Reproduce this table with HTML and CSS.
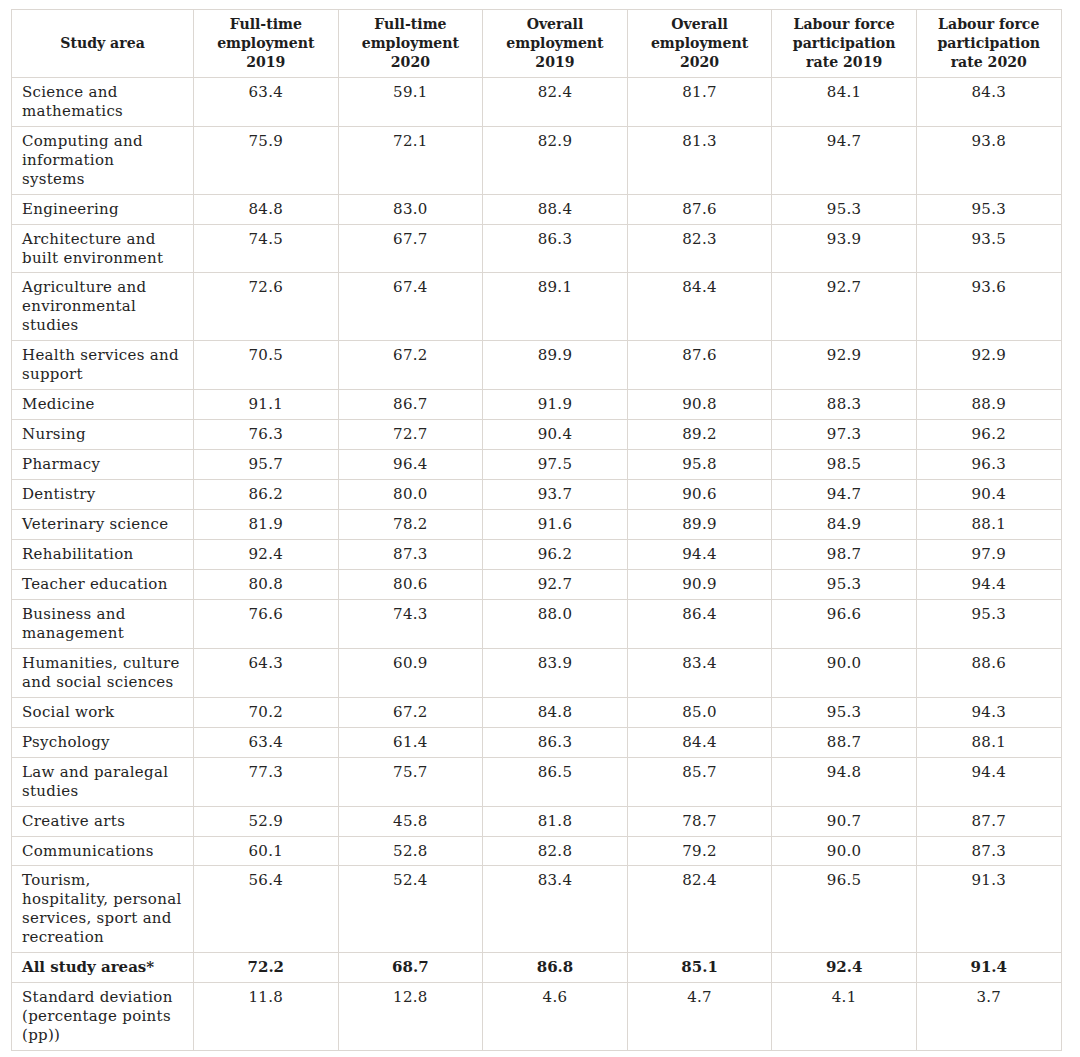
FILE: index.html
```html
<!DOCTYPE html>
<html lang="en">
<head>
<meta charset="utf-8">
<title>Employment outcomes by study area</title>
<link rel="stylesheet" href="styles.css">
</head>
<body>
<table class="data">
  <colgroup>
    <col class="c-area">
    <col class="c-num"><col class="c-num"><col class="c-num"><col class="c-num"><col class="c-num"><col class="c-num">
  </colgroup>
  <thead>
    <tr>
      <th>Study area</th>
      <th>Full-time<br>employment<br>2019</th>
      <th>Full-time<br>employment<br>2020</th>
      <th>Overall<br>employment<br>2019</th>
      <th>Overall<br>employment<br>2020</th>
      <th>Labour force<br>participation<br>rate 2019</th>
      <th>Labour force<br>participation<br>rate 2020</th>
    </tr>
  </thead>
  <tbody>
    <tr><td>Science and mathematics</td><td>63.4</td><td>59.1</td><td>82.4</td><td>81.7</td><td>84.1</td><td>84.3</td></tr>
    <tr><td>Computing and<br>information<br>systems</td><td>75.9</td><td>72.1</td><td>82.9</td><td>81.3</td><td>94.7</td><td>93.8</td></tr>
    <tr><td>Engineering</td><td>84.8</td><td>83.0</td><td>88.4</td><td>87.6</td><td>95.3</td><td>95.3</td></tr>
    <tr><td>Architecture and built environment</td><td>74.5</td><td>67.7</td><td>86.3</td><td>82.3</td><td>93.9</td><td>93.5</td></tr>
    <tr><td>Agriculture and environmental studies</td><td>72.6</td><td>67.4</td><td>89.1</td><td>84.4</td><td>92.7</td><td>93.6</td></tr>
    <tr><td>Health services and support</td><td>70.5</td><td>67.2</td><td>89.9</td><td>87.6</td><td>92.9</td><td>92.9</td></tr>
    <tr><td>Medicine</td><td>91.1</td><td>86.7</td><td>91.9</td><td>90.8</td><td>88.3</td><td>88.9</td></tr>
    <tr><td>Nursing</td><td>76.3</td><td>72.7</td><td>90.4</td><td>89.2</td><td>97.3</td><td>96.2</td></tr>
    <tr><td>Pharmacy</td><td>95.7</td><td>96.4</td><td>97.5</td><td>95.8</td><td>98.5</td><td>96.3</td></tr>
    <tr><td>Dentistry</td><td>86.2</td><td>80.0</td><td>93.7</td><td>90.6</td><td>94.7</td><td>90.4</td></tr>
    <tr><td>Veterinary science</td><td>81.9</td><td>78.2</td><td>91.6</td><td>89.9</td><td>84.9</td><td>88.1</td></tr>
    <tr><td>Rehabilitation</td><td>92.4</td><td>87.3</td><td>96.2</td><td>94.4</td><td>98.7</td><td>97.9</td></tr>
    <tr><td>Teacher education</td><td>80.8</td><td>80.6</td><td>92.7</td><td>90.9</td><td>95.3</td><td>94.4</td></tr>
    <tr><td>Business and management</td><td>76.6</td><td>74.3</td><td>88.0</td><td>86.4</td><td>96.6</td><td>95.3</td></tr>
    <tr><td>Humanities, culture and social sciences</td><td>64.3</td><td>60.9</td><td>83.9</td><td>83.4</td><td>90.0</td><td>88.6</td></tr>
    <tr><td>Social work</td><td>70.2</td><td>67.2</td><td>84.8</td><td>85.0</td><td>95.3</td><td>94.3</td></tr>
    <tr><td>Psychology</td><td>63.4</td><td>61.4</td><td>86.3</td><td>84.4</td><td>88.7</td><td>88.1</td></tr>
    <tr><td>Law and paralegal studies</td><td>77.3</td><td>75.7</td><td>86.5</td><td>85.7</td><td>94.8</td><td>94.4</td></tr>
    <tr><td>Creative arts</td><td>52.9</td><td>45.8</td><td>81.8</td><td>78.7</td><td>90.7</td><td>87.7</td></tr>
    <tr><td>Communications</td><td>60.1</td><td>52.8</td><td>82.8</td><td>79.2</td><td>90.0</td><td>87.3</td></tr>
    <tr><td>Tourism,<br><span class="nw">hospitality, personal</span><br>services, sport and<br>recreation</td><td>56.4</td><td>52.4</td><td>83.4</td><td>82.4</td><td>96.5</td><td>91.3</td></tr>
    <tr class="total"><td>All study areas*</td><td>72.2</td><td>68.7</td><td>86.8</td><td>85.1</td><td>92.4</td><td>91.4</td></tr>
    <tr><td>Standard deviation (percentage points (pp))</td><td>11.8</td><td>12.8</td><td>4.6</td><td>4.7</td><td>4.1</td><td>3.7</td></tr>
  </tbody>
</table>
</body>
</html>
```

FILE: styles.css
```css
html, body {
  margin: 0;
  background: #ffffff;
}

body {
  padding: 9px 11px 0 11px;
  font-family: "DejaVu Serif", "Liberation Serif", serif;
  font-size: 15px;
  color: #242424;
}

.data {
  border-collapse: collapse;
  table-layout: fixed;
  width: 1050px;
}

.c-area { width: 182px; }
.c-num { width: 144.6px; }

.data th,
.data td {
  border: 1px solid #dcd7d2;
  padding: 5px 10px;
  line-height: 18.95px;
}

.data th {
  font-size: 14.1px;
  font-weight: bold;
  text-align: center;
  vertical-align: middle;
  color: #1e1e1e;
}

.data td {
  text-align: center;
  vertical-align: top;
  letter-spacing: 0.3px;
}

.data td:first-child {
  text-align: left;
  padding-right: 4px;
}

.nw {
  white-space: nowrap;
}

.data .total td {
  font-weight: bold;
  letter-spacing: 0;
  color: #1e1e1e;
}
```
